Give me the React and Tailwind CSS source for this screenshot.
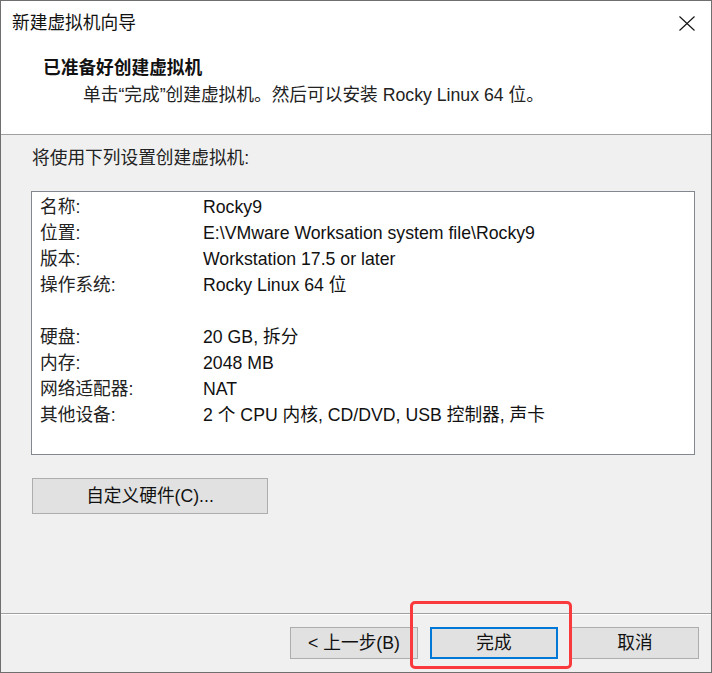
import React from "react";

const rows = [
  ["名称:", "Rocky9"],
  ["位置:", "E:\\VMware Worksation system file\\Rocky9"],
  ["版本:", "Workstation 17.5 or later"],
  ["操作系统:", "Rocky Linux 64 位"],
  ["", ""],
  ["硬盘:", "20 GB, 拆分"],
  ["内存:", "2048 MB"],
  ["网络适配器:", "NAT"],
  ["其他设备:", "2 个 CPU 内核, CD/DVD, USB 控制器, 声卡"],
];

export default function App() {
  return (
    <div
      className="relative w-[712px] h-[673px] bg-white border border-[#6f6f6f] flex flex-col text-[17.7px] text-[#111] overflow-hidden"
      style={{ fontFamily: '"Liberation Sans", "Noto Sans CJK SC", sans-serif' }}
    >
      {/* Title bar */}
      <div className="h-[44px] shrink-0 flex items-center justify-between pl-[11px] pr-[16px]">
        <span className="leading-[26px]">新建虚拟机向导</span>
        <svg width="16" height="15" viewBox="0 0 16 15" className="block">
          <path d="M0.5 0.5 L15.5 14.5 M15.5 0.5 L0.5 14.5" stroke="#111" strokeWidth="1.1" fill="none" />
        </svg>
      </div>

      {/* Header */}
      <div className="h-[90px] shrink-0 border-b border-[#a0a0a0] pt-[10px]">
        <div className="pl-[42px] leading-[26px] font-bold">已准备好创建虚拟机</div>
        <div className="pl-[82px] leading-[26px] mt-[1px] text-[#222]">
          单击“完成”创建虚拟机。然后可以安装 Rocky Linux 64 位。
        </div>
      </div>

      {/* Body */}
      <div className="h-[478px] shrink-0 bg-[#f0f0f0] flex flex-col pt-[10px]">
        <div className="pl-[31px] leading-[26px] text-[#222]">将使用下列设置创建虚拟机:</div>
        <div className="ml-[30px] mt-[20px] w-[664px] h-[264px] bg-white border border-[#828790] pt-[2px] pl-[8px]">
          {rows.map(([k, v], i) => (
            <div key={i} className="flex h-[26px] items-center leading-[26px]">
              <span className="w-[163px] shrink-0 text-[#222]">{k}</span>
              <span>{v}</span>
            </div>
          ))}
        </div>
        <div className="ml-[31px] mt-[23px] w-[236px] h-[36px] bg-[#e1e1e1] border border-[#adadad] flex items-center justify-center leading-[26px]">
          自定义硬件(C)...
        </div>
      </div>

      {/* Separator */}
      <div className="h-[1px] shrink-0 bg-[#a0a0a0]" />
      <div className="h-[1px] shrink-0 bg-white" />

      {/* Footer */}
      <div className="flex-1 bg-[#f0f0f0] flex justify-end items-start pt-[12px] pr-[12px]">
        <div className="w-[128px] h-[32px] bg-[#e1e1e1] border border-[#adadad] flex items-center justify-center leading-[26px]">
          &lt; 上一步(B)
        </div>
        <div className="ml-[12px] w-[128px] h-[32px] bg-[#e1e1e1] border-2 border-[#0078d7] flex items-center justify-center leading-[26px]">
          完成
        </div>
        <div className="ml-[13px] w-[128px] h-[32px] bg-[#e1e1e1] border border-[#adadad] flex items-center justify-center leading-[26px]">
          取消
        </div>
      </div>

      {/* Red annotation rectangle */}
      <div className="absolute left-[409px] top-[600px] w-[162px] h-[68px] border-[3px] border-[#f9393c] rounded-[5px] pointer-events-none" />
    </div>
  );
}
